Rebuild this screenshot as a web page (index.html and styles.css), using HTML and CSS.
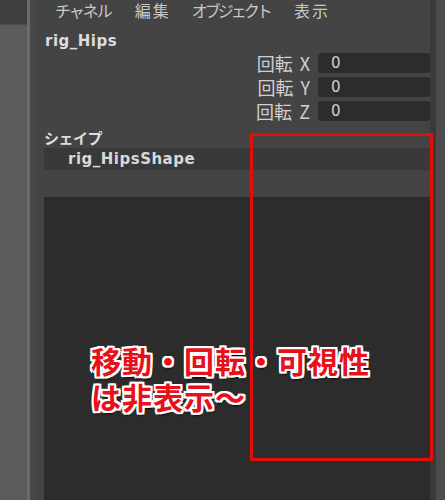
FILE: index.html
```html
<!DOCTYPE html>
<html lang="ja">
<head>
  <meta charset="UTF-8">
  <title>チャネルボックス</title>
  <link rel="stylesheet" href="styles.css">
</head>
<body>

  <div class="side">
    <div class="side-top"></div>
    <div class="side-rest"></div>
  </div>
  <div class="side-line"></div>
  <div class="side-gap"></div>

  <div class="panel">
    <div class="menu">
      <span class="kana">チャネル</span>
      <span class="kanji">編集</span>
      <span class="kana-long">オブジェクト</span>
      <span class="kanji">表示</span>
    </div>

    <div class="node-name">rig_Hips</div>

    <div class="attrs">
      <div class="attr">
        <span class="attr-label">回転 X</span>
        <span class="attr-value">0</span>
      </div>
      <div class="attr">
        <span class="attr-label">回転 Y</span>
        <span class="attr-value">0</span>
      </div>
      <div class="attr">
        <span class="attr-label">回転 Z</span>
        <span class="attr-value">0</span>
      </div>
    </div>

    <div class="section-title">シェイプ</div>
    <div class="shape-row">rig_HipsShape</div>
    <div class="spacer"></div>
    <div class="empty"></div>

    <!-- annotation over the screenshot -->
    <div class="mark"></div>
    <div class="note">
      <div class="note-line">移動・回転・可視性</div>
      <div class="note-line">は非表示～</div>
    </div>
  </div>

  <div class="edge"></div>
  <div class="scroll"></div>

</body>
</html>
```

FILE: styles.css
```css
html, body {
  margin: 0;
  height: 500px;
  overflow: hidden;
}

body {
  display: flex;
  background: #444;
  font-family: "Noto Sans CJK JP", "Noto Sans", sans-serif;
  color: #cfcfcf;
}

.side {
  width: 27px;
  display: flex;
  flex-direction: column;
}

.side-top {
  height: 24px;
  background: #3e3e3e;
  border-bottom: 1px solid #4a4a4a;
}

.side-rest {
  flex: 1;
  background: #5b5b5b;
}

.side-line {
  width: 3px;
  background: #6b6b6b;
}

.side-gap {
  width: 5px;
  background: #484848;
}

.panel {
  position: relative;
  flex: 1;
  display: flex;
  flex-direction: column;
  padding-left: 9px;
}

.menu {
  height: 20px;
  display: flex;
  align-items: center;
  padding-left: 11px;
  font-size: 16px;
  line-height: 20px;
  color: #c8c8c8;
}

.kana {
  letter-spacing: -2px;
}

.kanji {
  letter-spacing: 2px;
  margin-left: 24px;
}

.kana-long {
  letter-spacing: -3px;
  margin-left: 21px;
}

.node-name {
  margin-top: 12px;
  height: 20px;
  padding-left: 1px;
  font-family: "DejaVu Sans", sans-serif;
  font-weight: bold;
  font-size: 15px;
  letter-spacing: 0.5px;
  color: #ddd;
}

.attrs {
  display: flex;
  flex-direction: column;
  gap: 4px;
  margin-top: 1px;
}

.attr {
  display: flex;
  justify-content: flex-end;
  align-items: center;
  gap: 8px;
  height: 20px;
}

.attr-label {
  font-size: 18px;
  line-height: 20px;
  color: #d0d0d0;
  word-spacing: 3px;
}

.attr-value {
  width: 99px;
  height: 20px;
  padding-left: 13px;
  background: #2c2c2c;
  border-radius: 3px;
  font-family: "DejaVu Sans", sans-serif;
  font-size: 15px;
  line-height: 20px;
  color: #d0d0d0;
}

.section-title {
  margin-top: 7px;
  height: 20px;
  font-size: 15px;
  font-weight: bold;
  letter-spacing: -0.5px;
  line-height: 20px;
  color: #ddd;
}

.shape-row {
  height: 22px;
  padding-left: 24px;
  background: #393939;
  font-family: "DejaVu Sans", sans-serif;
  font-weight: bold;
  font-size: 15px;
  letter-spacing: 0.5px;
  line-height: 22px;
  color: #d8d8d8;
}

.spacer {
  height: 27px;
}

.empty {
  flex: 1;
  background: #2c2c2c;
}

.mark {
  position: absolute;
  left: 215px;
  top: 133px;
  width: 177px;
  height: 322px;
  border: 3px solid #e40d0d;
}

.note {
  position: absolute;
  left: 56px;
  top: 343px;
  display: flex;
  flex-direction: column;
  gap: 2px;
}

.note-line {
  height: 34px;
  font-size: 30px;
  font-weight: bold;
  line-height: 34px;
  color: #e8101a;
  letter-spacing: 1px;
  text-shadow:
    2px 0 #fff, -2px 0 #fff, 0 2px #fff, 0 -2px #fff,
    2px 2px #fff, -2px -2px #fff, 2px -2px #fff, -2px 2px #fff,
    1px 3px 2px #000;
}

.edge {
  width: 6px;
  background: #3a3a3a;
}

.scroll {
  width: 9px;
  background: #4c4c4c;
}
```
